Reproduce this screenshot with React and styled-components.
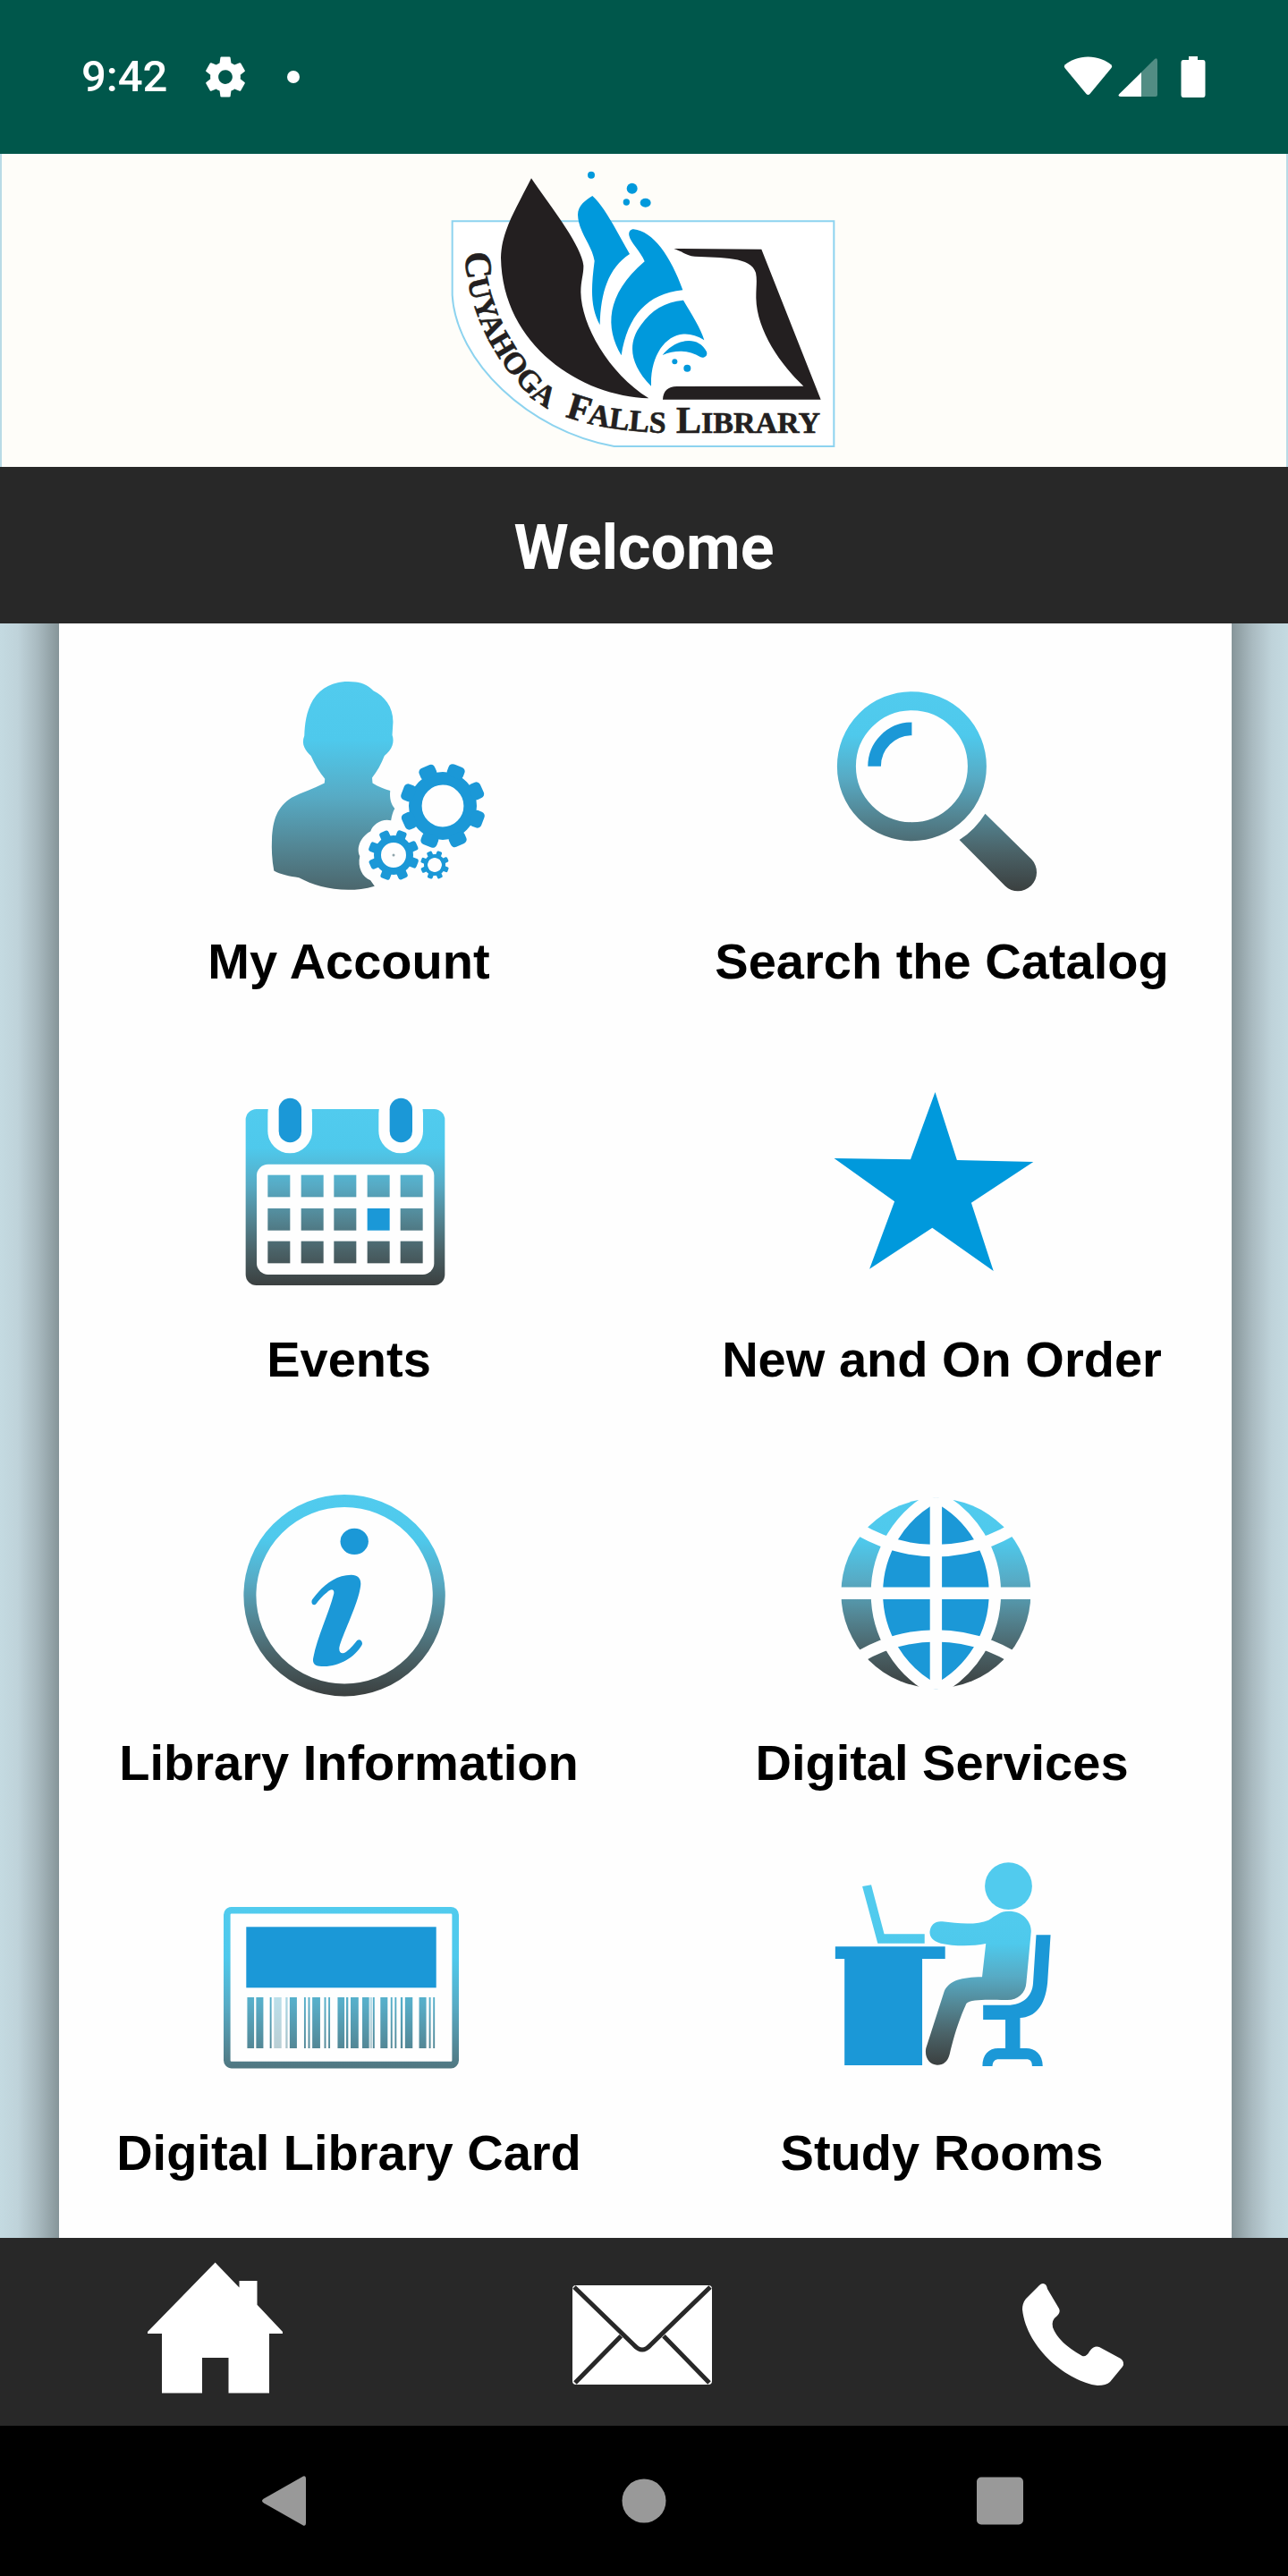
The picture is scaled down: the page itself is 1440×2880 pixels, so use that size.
import React from "react";
import styled, { createGlobalStyle } from "styled-components";

const GlobalStyle = createGlobalStyle`
  * { box-sizing: border-box; }
  body { margin: 0; background: #000; }
  button { appearance: none; border: 0; padding: 0; background: none; cursor: pointer; }
  svg { display: block; flex: none; overflow: visible; }
`;

const BLUE = "#1b98d7";
const LOGO_BLUE = "#0099dc";
const INK = "#231f20";

const Screen = styled.div`
  display: flex;
  flex-direction: column;
  min-height: 100vh;
  font-family: Roboto, "Liberation Sans", sans-serif;
`;

const StatusBar = styled.div`
  display: flex;
  align-items: center;
  justify-content: space-between;
  height: 172px;
  padding: 0 90px 0 91px;
  background: #00574b;
  color: #fff;
`;

const StatusGroup = styled.div`
  display: flex;
  align-items: center;
  gap: 38px;
`;

const Clock = styled.time`
  font-size: 49px;
  font-weight: 500;
  line-height: 56px;
`;

const Brand = styled.header`
  display: flex;
  justify-content: center;
  height: 350px;
  background: #fefdf9;
  border: solid #b9dbe6;
  border-width: 0 2px;
`;

const TitleBar = styled.div`
  display: flex;
  align-items: center;
  justify-content: center;
  height: 175px;
  padding-top: 4px;
  background: #282828;
`;

const Title = styled.h1`
  margin: 0;
  color: #fff;
  font-size: 70px;
  font-weight: 700;
  line-height: 80px;
`;

const Main = styled.main`
  flex: 1;
  padding: 0 63px 0 66px;
  background:
    linear-gradient(to right, #c4dae1 0, #bfd3da 20px, #a9bac0 42px, #869599 66px) left / 66px 100% no-repeat,
    linear-gradient(to left, #c4dae1 0, #bfd3da 18px, #a9bac0 40px, #869599 63px) right / 63px 100% no-repeat;
`;

const TileGrid = styled.div`
  display: grid;
  grid-template-columns: 1fr 1fr;
  grid-template-rows: 410px 445px 451px 436px;
  column-gap: 15px;
  min-height: 100%;
  padding-bottom: 63px;
  background: #fefefe;
`;

const Tile = styled.button`
  display: flex;
  flex-direction: column;
  align-items: center;
  justify-content: flex-end;
  gap: 20px;
`;

const TileLabel = styled.span`
  color: #000;
  font-family: "Liberation Sans", Arial, sans-serif;
  font-size: 56px;
  font-weight: 700;
  line-height: 64px;
  white-space: nowrap;
`;

const ActionBar = styled.nav`
  display: grid;
  grid-template-columns: repeat(3, 1fr);
  height: 210px;
  background: #282828;
`;

const SystemBar = styled.nav`
  display: grid;
  grid-template-columns: repeat(3, 1fr);
  height: 168px;
  padding: 0 120px;
  background: #000;
`;

const BarButton = styled.button`
  display: flex;
  align-items: center;
  justify-content: center;
`;

function Fade({ id, from, to }) {
  return (
    <linearGradient id={id} gradientUnits="userSpaceOnUse" x1="0" x2="0" y1={from} y2={to}>
      <stop offset="0" stopColor="#51cbee" />
      <stop offset="0.22" stopColor="#4ec9ec" />
      <stop offset="0.43" stopColor="#57abc5" />
      <stop offset="0.62" stopColor="#538694" />
      <stop offset="0.81" stopColor="#4a6166" />
      <stop offset="1" stopColor="#3b4040" />
    </linearGradient>
  );
}

function TileIcon({ children }) {
  return (
    <svg width="280" height="280" viewBox="0 0 280 280" aria-hidden="true">
      {children}
    </svg>
  );
}

function Cog({ x, y, outer, body, hole, tooth }) {
  return (
    <g transform={`translate(${x} ${y})`}>
      <circle r={(body + hole) / 2} fill="none" stroke={BLUE} strokeWidth={body - hole} />
      {[0, 1, 2, 3, 4, 5, 6, 7].map((i) => (
        <rect
          key={i}
          x={-tooth / 2}
          y={-outer}
          width={tooth}
          height={outer - body + 4}
          rx={tooth / 4}
          fill={BLUE}
          transform={`rotate(${21 + i * 45})`}
        />
      ))}
    </g>
  );
}

function AccountIcon() {
  return (
    <TileIcon>
      <defs><Fade id="fade-account" from={642} to={1372} /></defs>
      <g transform="translate(-250 -243) scale(.4592 .4082)">
        <path
          fill="url(#fade-account)"
          d="M848 642C880 642 896 652 909 667C936 682 957 710 957 752L955 788C961 808 955 828 936 845C928 868 918 888 906 905L907 920C920 930 936 936 950 941C948 962 952 978 961 990C956 1000 954 1010 952 1022C930 1016 908 1032 902 1052C880 1065 866 1095 876 1120C870 1150 882 1178 902 1186L912 1202C890 1210 868 1212 848 1212C800 1212 760 1198 728 1179C705 1175 682 1170 667 1160C662 1130 661 1100 662 1075C664 1020 675 985 710 960C735 945 765 935 790 920L791 908C778 890 766 868 757 845C745 832 732 815 741 790C742 760 745 725 762 692C782 658 812 642 848 642Z"
        />
      </g>
      <Cog x={245} y={158} outer={48} body={38} hole={23.4} tooth={19} />
      <Cog x={190} y={213} outer={28.5} body={22} hole={14} tooth={11} />
      <Cog x={236} y={224} outer={16} body={12} hole={8} tooth={6} />
      <circle cx="190" cy="213" r="1.5" fill="#8fa5ab" />
    </TileIcon>
  );
}

function SearchIcon() {
  return (
    <TileIcon>
      <defs><Fade id="fade-search" from={30} to={253} /></defs>
      <circle cx="106.4" cy="113.7" r="73" fill="none" stroke="url(#fade-search)" strokeWidth="21" />
      <path d="M64.6 113.7A41.8 41.8 0 0 1 106.4 71.9" fill="none" stroke={BLUE} strokeWidth="14.6" />
      <path
        fill="url(#fade-search)"
        d="M188.5 166.7L240.4 217.7C248 226 248 239 240 247C231 255.5 219 255 211 247.7L159.6 196Q177 185 188.5 166.7Z"
      />
    </TileIcon>
  );
}

function EventsIcon() {
  const columns = [238, 350, 460, 572, 683];
  const rows = [341, 453, 563];
  return (
    <TileIcon>
      <defs><Fade id="fade-events" from={120} to={711} /></defs>
      <g transform="translate(-30 12) scale(.33333)">
        <rect x="164" y="120" width="668" height="591" rx="36" fill="url(#fade-events)" />
        {[238, 610].map((x) => (
          <g key={x}>
            <rect x={x} y="60" width="149" height="208" rx="74" fill="#fefefe" />
            <rect x={x + 37} y="83" width="76" height="149" rx="38" fill={BLUE} />
          </g>
        ))}
        <rect x="201" y="305" width="595" height="370" rx="38" fill="#fefefe" />
        {rows.map((y, r) =>
          columns.map((x, c) => (
            <rect
              key={`${r}-${c}`}
              x={x}
              y={y}
              width="75"
              height="74"
              fill={r === 1 && c === 3 ? BLUE : "url(#fade-events)"}
            />
          ))
        )}
      </g>
    </TileIcon>
  );
}

function StarIcon() {
  return (
    <TileIcon>
      <path
        fill={LOGO_BLUE}
        d="M132.5 33L156.9 109L242.3 111L172.9 156.7L197.7 233L129.3 184.7L59.1 230.7L87.1 155.3L19.6 107L105 108.3Z"
      />
    </TileIcon>
  );
}

function InfoIcon() {
  return (
    <TileIcon>
      <defs><Fade id="fade-info" from={32} to={257} /></defs>
      <circle cx="135.1" cy="144.7" r="105.7" fill="none" stroke="url(#fade-info)" strokeWidth="14" />
      <g transform="translate(-150 1) scale(.3827 .3333)" fill={BLUE}>
        <ellipse cx="774" cy="250" rx="41" ry="44" />
        <path d="M651 445C680 400 715 363 765 362C785 362 795 375 792 400C785 460 740 560 730 605C728 625 738 630 750 620C765 608 775 592 782 582C790 575 800 585 796 597C775 640 725 672 680 669C660 670 650 660 654 640C665 570 700 490 714 425C716 408 705 408 695 420C680 432 670 448 662 460C655 468 645 458 651 445Z" />
      </g>
    </TileIcon>
  );
}

function GlobeIcon() {
  const lens = "M0 -108.4A122 122 0 0 1 0 108.4A122 122 0 0 1 0 -108.4Z";
  return (
    <TileIcon>
      <defs>
        <Fade id="fade-globe" from={-106} to={106} />
        <clipPath id="globe-disc"><circle r="107" /></clipPath>
      </defs>
      <g transform="translate(133.4 142.3)">
        <circle r="106" fill="url(#fade-globe)" />
        <g clipPath="url(#globe-disc)" stroke="#fefefe" strokeWidth="13.4">
          <path d={lens} fill={BLUE} />
          <path d="M-110 -88.9A167 167 0 0 0 110 -88.9M-110 88.9A167 167 0 0 1 110 88.9" fill="none" />
          <path d="M0 -110V110M-110 0H110" fill="none" />
        </g>
      </g>
    </TileIcon>
  );
}

const BARS = [
  [461, 20], [487, 21], [527, 5], [539, 22, 0.4], [573, 6, 0.5], [585, 21], [627, 5], [639, 5],
  [651, 23], [686, 5], [698, 5], [725, 20], [750, 6], [763, 23], [797, 20], [819, 7, 0.4],
  [828, 5], [850, 21], [880, 5], [892, 5], [909, 6], [922, 22], [963, 21], [992, 5], [1004, 5],
];

function CardIcon() {
  return (
    <TileIcon>
      <defs><Fade id="fade-card" from={57} to={314} /></defs>
      <rect x="3.8" y="60.8" width="255.4" height="172.8" rx="5" fill="none" stroke="url(#fade-card)" strokeWidth="7.6" />
      <rect x="25.3" y="79.3" width="212.4" height="68" fill={BLUE} />
      <g transform="translate(-150 0) scale(.3827 1)" fill="url(#fade-card)">
        {BARS.map(([x, width, opacity = 1]) => (
          <rect key={x} x={x} y="158" width={width} height="57" opacity={opacity} />
        ))}
      </g>
    </TileIcon>
  );
}

function StudyIcon() {
  return (
    <TileIcon>
      <defs><Fade id="fade-study" from={225} to={744} /></defs>
      <g transform="translate(-133 -15) scale(.3827 .3333)">
        <g fill="url(#fade-study)">
          <ellipse cx="908" cy="146" rx="69" ry="79" />
          <path d="M908 230C950 230 976 265 974 300L960 470C958 505 935 528 905 528C870 529 800 522 785 540C765 590 748 650 736 710C730 735 718 746 700 746C678 746 662 722 667 690L720 500C735 462 770 452 831 451L842 339C800 349 745 347 710 338C685 330 678 315 678 300C680 275 695 262 715 265C760 272 815 278 850 260C870 245 885 230 908 230Z" />
          <path d="M481 147L507 142L545 307H663V338H526Z" />
        </g>
        <g fill={BLUE}>
          <path d="M402 349H723V390H656V747H429V390H402Z" />
          <path d="M989 310H1031L1022 470C1015 550 985 585 942 588V690H960C985 690 1008 710 1008 750H977C977 735 972 727 960 727H880C868 727 862 735 861 750H832C832 712 850 690 878 690H899V594H834V545H905C950 545 978 515 980 470Z" />
        </g>
      </g>
    </TileIcon>
  );
}

const LogoLetters = styled.text`
  fill: ${INK};
  stroke: ${INK};
  stroke-width: 2px;
  font-family: "Liberation Serif", "Times New Roman", serif;
  font-size: 102px;
  font-weight: 700;
`;

const Initial = styled.tspan`
  font-size: 126px;
`;

function Logo() {
  return (
    <svg width="460" height="350" viewBox="0 6 1380 1050" role="img" aria-label="Cuyahoga Falls Library">
      <defs>
        <path id="logo-curve" d="M90 338C92 520 190 715 330 837C440 915 620 940 800 943" />
      </defs>
      <path d="M47 232H1327V987H590C300 935 60 700 47 480Z" fill="#fff" stroke="#8dd3ef" strokeWidth="6" />
      <g fill={INK}>
        <path d="M312 88C360 160 480 310 487 380C488 410 478 430 478 470C480 580 570 740 706 826C480 820 215 650 210 355C212 270 250 210 312 88Z" />
        <path d="M790 324L1084 326L1283 830H753C755 800 770 787 800 786L1225 785C1150 715 1068 600 1066 490C1066 450 1070 430 1065 405C1050 350 950 355 860 350C835 348 815 332 790 324Z" />
      </g>
      <g fill={LOGO_BLUE}>
        <path d="M517 147C560 185 600 270 642 342C570 390 545 470 542 580C510 520 512 460 524 365C515 310 470 270 468 210C468 180 495 160 517 147Z" />
        <path d="M655 259C720 265 780 350 820 463C700 475 635 550 614 682C560 590 560 480 692 367C680 335 645 305 640 280C638 266 645 259 655 259Z" />
        <path d="M822 497C850 545 880 590 892 631C800 570 710 650 714 785C640 710 635 640 680 580C715 530 760 503 822 497Z" />
        <path d="M752 681C790 630 870 610 900 670C905 685 890 692 880 688C840 665 800 662 752 681Z" />
        <circle cx="513" cy="77" r="12" />
        <circle cx="650" cy="122" r="18" />
        <circle cx="631" cy="168" r="11" />
        <ellipse cx="695" cy="170" rx="18" ry="15" />
        <circle cx="793" cy="703" r="9" />
        <circle cx="835" cy="725" r="12" />
      </g>
      <LogoLetters>
        <textPath href="#logo-curve"><Initial>C</Initial>UYAHOGA</textPath>
      </LogoLetters>
      <LogoLetters>
        <textPath href="#logo-curve" startOffset="676"><Initial>F</Initial>ALLS</textPath>
      </LogoLetters>
      <LogoLetters x="798" y="943"><Initial>L</Initial>IBRARY</LogoLetters>
    </svg>
  );
}

function GearGlyph() {
  return (
    <svg width="54" height="54" viewBox="0 0 24 24" fill="#fff" aria-hidden="true">
      <path d="M19.43 12.98c.04-.32.07-.64.07-.98s-.03-.66-.07-.98l2.11-1.65c.19-.15.24-.42.12-.64l-2-3.46c-.12-.22-.39-.3-.61-.22l-2.49 1c-.52-.4-1.08-.73-1.69-.98l-.38-2.65C14.46 2.18 14.25 2 14 2h-4c-.25 0-.46.18-.49.42l-.38 2.65c-.61.25-1.17.59-1.69.98l-2.49-1c-.23-.09-.49 0-.61.22l-2 3.46c-.13.22-.07.49.12.64l2.11 1.65c-.04.32-.07.65-.07.98s.03.66.07.98l-2.11 1.65c-.19.15-.24.42-.12.64l2 3.46c.12.22.39.3.61.22l2.49-1c.52.4 1.08.73 1.69.98l.38 2.65c.03.24.24.42.49.42h4c.25 0 .46-.18.49-.42l.38-2.65c.61-.25 1.17-.59 1.69-.98l2.49 1c.23.09.49 0 .61-.22l2-3.46c.12-.22.07-.49-.12-.64l-2.11-1.65zM12 15.5c-1.93 0-3.5-1.57-3.5-3.5s1.57-3.5 3.5-3.5 3.5 1.57 3.5 3.5-1.57 3.5-3.5 3.5z" />
    </svg>
  );
}

const Dot = styled.span`
  width: 14px;
  height: 14px;
  margin-left: 4px;
  border-radius: 50%;
  background: #fff;
`;

function SignalGlyphs() {
  return (
    <svg width="160" height="48" viewBox="0 0 160 48" fill="#fff" aria-hidden="true">
      <path d="M26.5 1.5C37 1.5 45.5 5 52.5 10.5Q54 12 52.5 14L28.5 43Q26.5 45 24.5 43L.5 14Q-1 12 .5 10.5C7.5 5 16 1.5 26.5 1.5Z" />
      <path d="M104 6V44Q104 46 102 46H63Q59 46 61.5 43L101 4Q104 2 104 6Z" opacity=".32" />
      <path d="M86 19V46H63Q59 46 61.5 43Z" />
      <path d="M139 1H149V5H155Q157.5 5 157.5 8V44Q157.5 47 155 47H133Q130.5 47 130.5 44V8Q130.5 5 133 5H139Z" />
    </svg>
  );
}

function ActionIcon({ children }) {
  return (
    <svg width="160" height="160" viewBox="0 0 160 160" fill="#fff" aria-hidden="true">
      {children}
    </svg>
  );
}

const TILES = [
  ["My Account", AccountIcon],
  ["Search the Catalog", SearchIcon],
  ["Events", EventsIcon],
  ["New and On Order", StarIcon],
  ["Library Information", InfoIcon],
  ["Digital Services", GlobeIcon],
  ["Digital Library Card", CardIcon],
  ["Study Rooms", StudyIcon],
];

export default function App() {
  return (
    <Screen>
      <GlobalStyle />
      <StatusBar>
        <StatusGroup>
          <Clock>9:42</Clock>
          <GearGlyph />
          <Dot />
        </StatusGroup>
        <SignalGlyphs />
      </StatusBar>
      <Brand>
        <Logo />
      </Brand>
      <TitleBar>
        <Title>Welcome</Title>
      </TitleBar>
      <Main>
        <TileGrid>
          {TILES.map(([label, Icon]) => (
            <Tile key={label} type="button">
              <Icon />
              <TileLabel>{label}</TileLabel>
            </Tile>
          ))}
        </TileGrid>
      </Main>
      <ActionBar aria-label="Quick actions">
        <BarButton type="button" aria-label="Home">
          <ActionIcon>
            <path d="M80.6 2.5L107.5 30.500V23H127.5V49.7L156 80V82H141V148.5H95.5V109H66V148.5H21V82H5V80Z" />
          </ActionIcon>
        </BarButton>
        <BarButton type="button" aria-label="Email">
          <ActionIcon>
            <rect x="0" y="28" width="156" height="111" rx="4" />
            <path
              d="M2 30L69 95Q78 105 87 95L154 30M54.3 84.7L3 137M102 84.7L153 137"
              fill="none"
              stroke="#282828"
              strokeWidth="5"
            />
          </ActionIcon>
        </BarButton>
        <BarButton type="button" aria-label="Call">
          <ActionIcon>
            <path d="M46 26Q50 26 51 32L64 54Q66 58 62 62Q55 67 57 75Q63 92 90 107C93 108 96 106 98 102Q103 95 109 97L133 110Q138 114 135 119L121 136Q117 140 107 140C75 136 28 100 23 55Q23 48 27 43L42 28Q44 26 46 26Z" />
          </ActionIcon>
        </BarButton>
      </ActionBar>
      <SystemBar aria-label="System navigation">
        <BarButton type="button" aria-label="Back">
          <svg width="56" height="56" viewBox="0 0 56 56" fill="#999" aria-hidden="true">
            <path d="M47 .5Q50 -.5 50 3V53Q50 56.500 47 55.500L3 30.500Q-1 28 3 25.500Z" />
          </svg>
        </BarButton>
        <BarButton type="button" aria-label="Home screen">
          <svg width="56" height="56" viewBox="0 0 56 56" fill="#999" aria-hidden="true">
            <circle cx="28" cy="28" r="24.5" />
          </svg>
        </BarButton>
        <BarButton type="button" aria-label="Recent apps">
          <svg width="56" height="56" viewBox="0 0 56 56" fill="#999" aria-hidden="true">
            <rect x="0" y="1.5" width="52" height="53" rx="5" />
          </svg>
        </BarButton>
      </SystemBar>
    </Screen>
  );
}
